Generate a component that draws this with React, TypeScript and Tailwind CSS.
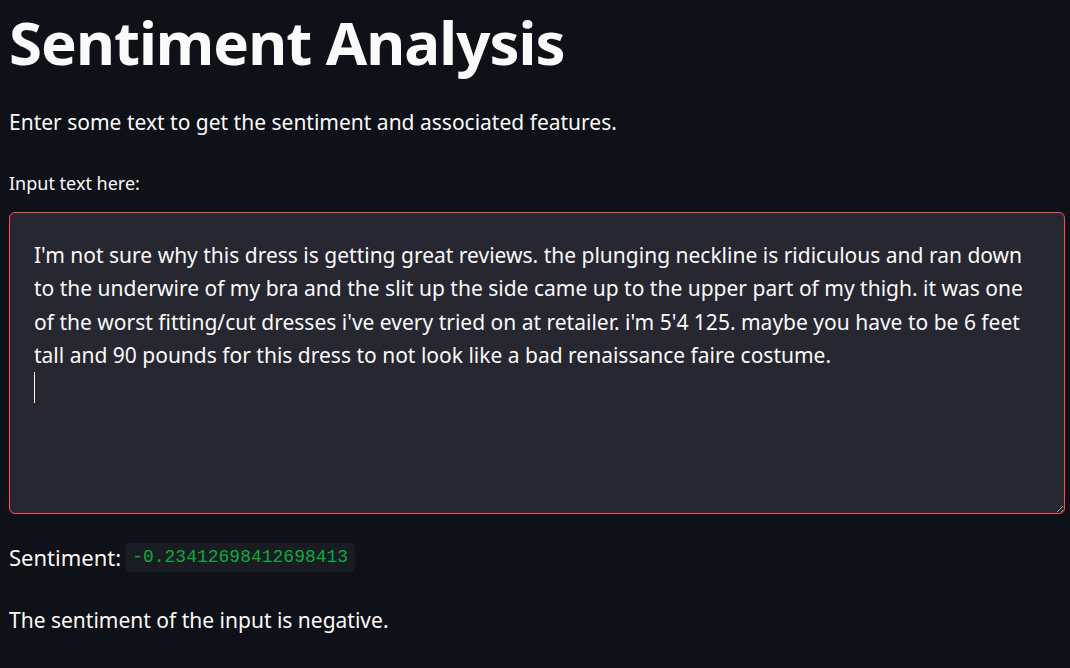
import { useEffect, useRef } from "react";

const review =
  "I'm not sure why this dress is getting great reviews. the plunging neckline is ridiculous and ran down\nto the underwire of my bra and the slit up the side came up to the upper part of my thigh. it was one\nof the worst fitting/cut dresses i've every tried on at retailer. i'm 5'4 125. maybe you have to be 6 feet\ntall and 90 pounds for this dress to not look like a bad renaissance faire costume.\n";

const App = () => {
  const areaRef = useRef<HTMLTextAreaElement>(null);

  useEffect(() => {
    const el = areaRef.current;
    if (el) {
      el.focus();
      el.setSelectionRange(review.length, review.length);
    }
  }, []);

  return (
    <div
      className="min-h-[668px] w-full bg-[#0e1117] text-[#fafafa] px-[9px]"
      style={{ fontFamily: "'Noto Sans', sans-serif" }}
    >
      <h1 className="pt-[2px] text-[60px] font-bold leading-[80px] tracking-[-1px]">
        Sentiment Analysis
      </h1>

      <p className="mt-[25px] text-[21px] leading-[30px]">
        Enter some text to get the sentiment and associated features.
      </p>

      <label className="mt-[34px] block text-[18px] leading-[24px]">Input text here:</label>

      <div className="relative mt-[17px] w-[1056px]">
        <textarea
          ref={areaRef}
          defaultValue={review}
          spellCheck={false}
          className="block h-[302px] w-full resize-y rounded-[6px] border border-[#ff4b4b] bg-[#262730] px-[24px] pt-[26px] text-[21px] leading-[33.3px] text-[#fafafa] caret-transparent outline-none whitespace-pre-wrap overflow-hidden"
          style={{ fontFamily: "'Noto Sans', sans-serif" }}
        />
        {/* caret drawn so it shows regardless of blink phase */}
        <div className="pointer-events-none absolute left-[25px] top-[160px] h-[31px] w-px bg-[#fafafa]" />
      </div>

      <div className="mt-[28px] flex items-center gap-[4px]">
        <span className="text-[22px] leading-[30px]">Sentiment:</span>
        <code
          className="rounded-[5px] bg-[#1a1c24] px-[7px] py-[2px] text-[18px] leading-[25px] text-[#09ab3b]"
          style={{ fontFamily: "'Liberation Mono', monospace" }}
        >
          -0.23412698412698413
        </code>
      </div>

      <p className="mt-[33px] text-[21px] leading-[30px]">The sentiment of the input is negative.</p>
    </div>
  );
};

export default App;
